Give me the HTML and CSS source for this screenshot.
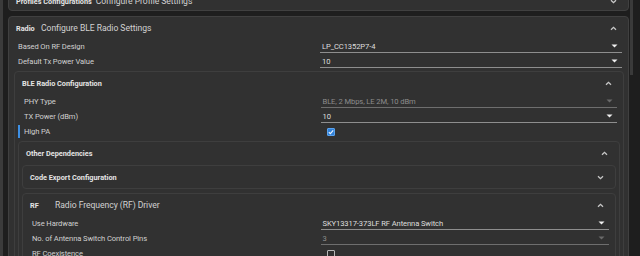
FILE: index.html
```html
<!DOCTYPE html>
<html>
	<head>
		<meta charset="UTF-8">
		<title>BLE Radio</title>
		<link rel="stylesheet" href="styles.css">
	</head>
	<body>
		<div class="shell">
			<div class="edge"></div>
			<div class="main">
				<div class="card top">
					<div class="head">
						<b class="key">Profiles Configurations</b>
						<span class="title">Configure Profile Settings</span>
						<svg class="chev" width="7" height="5" viewBox="0 0 7 5"><path d="M1 1.2 L3.5 3.7 L6 1.2" /></svg>
					</div>
				</div>
				<div class="card">
					<div class="head">
						<b class="key">Radio</b>
						<span class="title">Configure BLE Radio Settings</span>
						<svg class="chev" width="7" height="5" viewBox="0 0 7 5"><path d="M1 3.8 L3.5 1.3 L6 3.8" /></svg>
					</div>
					<div class="row">
						<span class="label">Based On RF Design</span>
						<span class="value">LP_CC1352P7-4<svg class="caret" width="7" height="4" viewBox="0 0 7 4"><path d="M0.5 0.5h6L3.5 3.5z" /></svg></span>
					</div>
					<div class="row">
						<span class="label">Default Tx Power Value</span>
						<span class="value">10<svg class="caret" width="7" height="4" viewBox="0 0 7 4"><path d="M0.5 0.5h6L3.5 3.5z" /></svg></span>
					</div>

					<div class="card sub">
						<div class="head">
							<b class="key">BLE Radio Configuration</b>
							<svg class="chev" width="7" height="5" viewBox="0 0 7 5"><path d="M1 3.8 L3.5 1.3 L6 3.8" /></svg>
						</div>
						<div class="row">
							<span class="label">PHY Type</span>
							<span class="value off">BLE, 2 Mbps, LE 2M, 10 dBm<svg class="caret" width="7" height="4" viewBox="0 0 7 4"><path d="M0.5 0.5h6L3.5 3.5z" /></svg></span>
						</div>
						<div class="row">
							<span class="label">TX Power (dBm)</span>
							<span class="value">10<svg class="caret" width="7" height="4" viewBox="0 0 7 4"><path d="M0.5 0.5h6L3.5 3.5z" /></svg></span>
						</div>
						<div class="row">
							<span class="label mark">High PA</span>
							<span class="value plain">
								<span class="check on"><svg width="6" height="6" viewBox="0 0 6 6"><path d="M0.8 3.2 L2.4 4.7 L5.2 1.3" /></svg></span>
							</span>
						</div>

						<div class="card sub">
							<div class="head">
								<b class="key">Other Dependencies</b>
								<svg class="chev" width="7" height="5" viewBox="0 0 7 5"><path d="M1 3.8 L3.5 1.3 L6 3.8" /></svg>
							</div>

							<div class="card sub">
								<div class="head">
									<b class="key">Code Export Configuration</b>
									<svg class="chev" width="7" height="5" viewBox="0 0 7 5"><path d="M1 1.2 L3.5 3.7 L6 1.2" /></svg>
								</div>
							</div>

							<div class="card sub">
								<div class="head">
									<b class="key">RF</b>
									<span class="title">Radio Frequency (RF) Driver</span>
									<svg class="chev" width="7" height="5" viewBox="0 0 7 5"><path d="M1 3.8 L3.5 1.3 L6 3.8" /></svg>
								</div>
								<div class="row">
									<span class="label">Use Hardware</span>
									<span class="value">SKY13317-373LF RF Antenna Switch<svg class="caret" width="7" height="4" viewBox="0 0 7 4"><path d="M0.5 0.5h6L3.5 3.5z" /></svg></span>
								</div>
								<div class="row">
									<span class="label">No. of Antenna Switch Control Pins</span>
									<span class="value off">3<svg class="caret" width="7" height="4" viewBox="0 0 7 4"><path d="M0.5 0.5h6L3.5 3.5z" /></svg></span>
								</div>
								<div class="row">
									<span class="label">RF Coexistence</span>
									<span class="value plain"><span class="check"></span></span>
								</div>
							</div>
						</div>
					</div>
				</div>
			</div>
			<div class="scroll"><div class="thumb"></div></div>
		</div>
	</body>
</html>
```

FILE: styles.css
```css
body{
	margin: 0;
	background: #1e1e1e;
	font-family: Roboto, "Liberation Sans", sans-serif;
	height: 256px;
	overflow: hidden;
}
.shell{
	display: flex;
	height: 256px;
}
.edge{
	width: 3px;
	background: #3b3b3b;
	margin-right: 5px;
}
.main{
	width: 621px;
	margin-top: -9px;
}
.scroll{
	width: 3px;
	margin-left: 1px;
}
.thumb{
	height: 75px;
	background: #3a3a3a;
}
.card{
	background: #313131;
	border: 1px solid #404040;
	border-radius: 4px;
}
.top{
	margin-bottom: 5px;
}
.top .head{
	height: 18px;
}
.sub{
	margin: 2px 4px 0 5px;
	border-color: #3e3e3e;
}
.sub .sub{
	margin: 2px 3px 0 3px;
}
.sub .sub .sub{
	margin: 1px 3px 0 3px;
}
.sub .sub .sub + .sub{
	margin-top: 4px;
}
.head{
	display: flex;
	align-items: center;
	height: 22px;
	padding: 0 11px 0 7px;
}
.key{
	min-width: 21px;
	margin-right: 4px;
	font-size: 7.3px;
	font-weight: bold;
	color: #e4e4e4;
}
.title{
	font-size: 8.6px;
	letter-spacing: -0.05px;
	color: #d2d2d2;
}
.chev{
	margin-left: auto;
}
.chev path{
	fill: none;
	stroke: #c8c8c8;
	stroke-width: 1.3;
}
.row{
	display: grid;
	grid-template-columns: 1fr 1fr;
	align-items: center;
	height: 15px;
	padding: 0 6px 0 9px;
}
.label{
	font-size: 7.6px;
	letter-spacing: -0.1px;
	line-height: 13px;
	color: #d0d0d0;
}
.label.mark{
	margin-left: -6px;
	padding-left: 4px;
	border-left: 2px solid #3d8fe4;
}
.value{
	display: flex;
	align-items: center;
	justify-content: space-between;
	height: 12px;
	padding: 0 4px 0 2px;
	border-bottom: 1px solid #8e8e8e;
	font-size: 7.6px;
	letter-spacing: -0.1px;
	color: #dedede;
}
.caret path{
	fill: #f0f0f0;
}
.value.off{
	color: #8c8c8c;
	border-bottom-color: #6e6e6e;
}
.value.off .caret path{
	fill: #6a6a6a;
}
.value.plain{
	border-bottom: none;
	padding-left: 6px;
	justify-content: flex-start;
}
.check{
	display: flex;
	align-items: center;
	justify-content: center;
	box-sizing: border-box;
	width: 8px;
	height: 8px;
	border: 1px solid #b8b8b8;
	border-radius: 1px;
}
.check.on{
	background: #2f80d8;
	border-color: #5aa2ee;
}
.check path{
	fill: none;
	stroke: #e8f1fb;
	stroke-width: 1.2;
}
```
